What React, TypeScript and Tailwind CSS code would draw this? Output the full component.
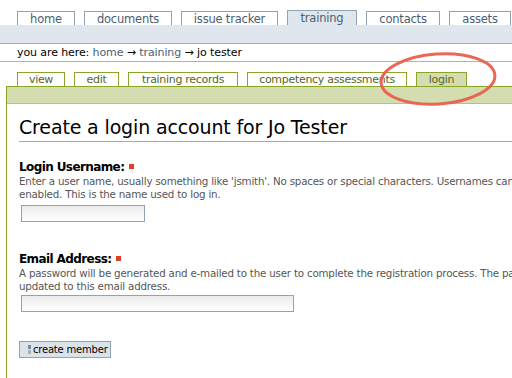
import React from 'react';

const font = { fontFamily: '"DejaVu Sans", "Lucida Grande", Verdana, sans-serif' };

const topTabs = [
  { label: 'home', w: 'w-[58px]' },
  { label: 'documents', w: 'w-[88px]' },
  { label: 'issue tracker', w: 'w-[97px]' },
  { label: 'training', w: 'w-[70px]', active: true },
  { label: 'contacts', w: 'w-[74px]' },
  { label: 'assets', w: 'w-[62px]' },
];

const subTabs = [
  { label: 'view', w: 'w-[48px]' },
  { label: 'edit', w: 'w-[45px]' },
  { label: 'training records', w: 'w-[110px]' },
  { label: 'competency assessments', w: 'w-[160px]' },
  { label: 'login', w: 'w-[51px]', active: true },
];

const Required = () => <span className="inline-block w-[5px] h-[5px] bg-[#e0402a] ml-[5px] align-middle relative -top-[1px]" />;

export default function App() {
  return (
    <div className="relative w-[512px] h-[378px] overflow-hidden bg-white text-black" style={font}>
      <div className="pt-[11px]">
        <div className="flex gap-[9px] pl-[17px] h-[14px] items-end">
          {topTabs.map((t) => (
            <div
              key={t.label}
              className={`${t.w} h-[14px] border border-b-0 border-[#8fa3b5] text-[11.5px] tracking-[-0.2px] leading-[14px] text-center whitespace-nowrap text-[#4b5e70] ${t.active ? 'bg-[#dfe6ee] h-[15px]' : 'bg-white'}`}
            >
              {t.label}
            </div>
          ))}
        </div>
        <div className="h-[19px] bg-[#dfe6ee] border-b border-[#9fb0bf]" />
        <div className="h-[18px] border-b border-[#a8b4bf] pl-[17px] text-[11px] tracking-[-0.1px] leading-[18px] whitespace-nowrap">
          you are here: <span className="text-[#4b6275]">home</span> → <span className="text-[#4b6275]">training</span> → jo tester
        </div>
        <div className="flex gap-[9px] pl-[17px] mt-[10px] h-[14px] items-end">
          {subTabs.map((t) => (
            <div
              key={t.label}
              className={`${t.w} h-[14px] border border-b-0 border-[#8aa62a] text-[11px] tracking-[-0.3px] leading-[14px] text-center whitespace-nowrap text-[#56661e] ${t.active ? 'bg-[#d3ddaf]' : 'bg-white'}`}
            >
              {t.label}
            </div>
          ))}
        </div>
        <div className="ml-[6px] border-l border-t border-[#8aa62a] h-[400px]">
          <div className="h-[17px] bg-[#d3ddaf] border-b border-[#b5c47a]" />
          <div className="pl-[12px]">
            <h1 className="mt-[11px] text-[19px] tracking-[-0.15px] leading-[24px] pb-[2px] border-b border-[#9aabb8] whitespace-nowrap">
              Create a login account for Jo Tester
            </h1>
            <div className="mt-[17px] text-[12px] tracking-[-0.6px] font-bold leading-[16px]">
              Login Username:<Required />
            </div>
            <div className="text-[10.3px] tracking-[-0.2px] leading-[13px] text-[#555] whitespace-nowrap">
              Enter a user name, usually something like 'jsmith'. No spaces or special characters. Usernames cannot be changed once
              <br />
              enabled. This is the name used to log in.
            </div>
            <input className="mt-[4px] ml-[2px] block w-[124px] h-[17px] border border-[#8fa3b5] bg-gradient-to-b from-[#ececec] to-white" />
            <div className="mt-[29px] text-[12px] tracking-[-0.6px] font-bold leading-[16px]">
              Email Address:<Required />
            </div>
            <div className="text-[10.3px] tracking-[-0.2px] leading-[13px] text-[#555] whitespace-nowrap">
              A password will be generated and e-mailed to the user to complete the registration process. The password can be
              <br />
              updated to this email address.
            </div>
            <input className="mt-[2px] ml-[2px] block w-[273px] h-[17px] border border-[#8fa3b5] bg-gradient-to-b from-[#ececec] to-white" />
            <button className="mt-[29px] flex items-center h-[17px] w-[92px] border border-[#8fa3b5] bg-[#dbe3ea] text-[10px] tracking-[-0.2px] leading-[15px] pl-[8px] whitespace-nowrap">
              <span className="flex flex-col gap-[1px] mr-[2px]">
                <span className="w-[3px] h-[4px] bg-[#7a8a98]" />
                <span className="w-[3px] h-[4px] bg-[#a5b2bd]" />
              </span>
              create member
            </button>
          </div>
        </div>
      </div>
      <svg className="absolute left-[376px] top-[49px]" width="124" height="60" viewBox="0 0 124 60">
        <ellipse cx="62" cy="30" rx="57" ry="25" fill="none" stroke="#e8604c" strokeWidth="3" transform="rotate(-4 62 30)" opacity="0.95" />
      </svg>
    </div>
  );
}
